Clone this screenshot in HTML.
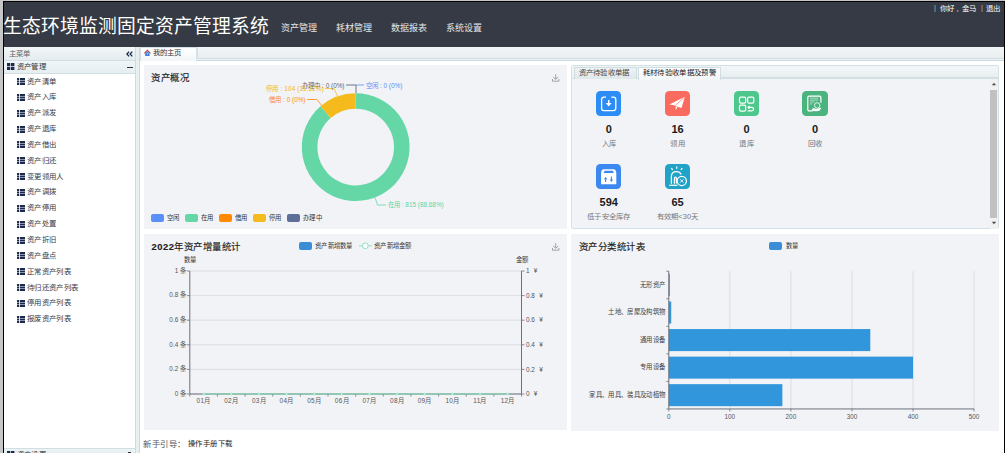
<!DOCTYPE html>
<html lang="zh-CN"><head><meta charset="utf-8"><style>
*{margin:0;padding:0;box-sizing:border-box}
html,body{width:1005px;height:453px;overflow:hidden;background:#c6c6c6;font-family:"Liberation Sans",sans-serif}
.a{position:absolute;white-space:nowrap}
svg{position:absolute;left:0;top:0;overflow:visible}
.it{position:absolute;left:17px;font-size:7.4px;letter-spacing:0.33px;line-height:10px;color:#343b4a;white-space:nowrap}
.it svg{left:0;top:1.5px}
.it span{position:absolute;left:10px;top:0;white-space:nowrap}
</style></head><body>
<div class="a" style="left:3px;top:1px;width:1002.00px;height:452.00px;background:#000"></div>
<div class="a" style="left:4px;top:2px;width:1000.00px;height:451.00px;background:#fff"></div>
<div class="a" style="left:4px;top:2px;width:1000.00px;height:44.50px;background:#353a44"></div>
<div class="a" style="left:2.70px;top:14.80px;font-size:18.8px;line-height:24px;color:#fff;font-weight:350">生态环境监测固定资产管理系统</div>
<div class="a" style="left:281.00px;top:22.20px;font-size:9px;line-height:12px;color:#e6e6e6;">资产管理</div>
<div class="a" style="left:336.00px;top:22.20px;font-size:9px;line-height:12px;color:#e6e6e6;">耗材管理</div>
<div class="a" style="left:391.00px;top:22.20px;font-size:9px;line-height:12px;color:#e6e6e6;">数据报表</div>
<div class="a" style="left:446.00px;top:22.20px;font-size:9px;line-height:12px;color:#e6e6e6;">系统设置</div>
<div class="a" style="left:934.00px;top:3.40px;font-size:7.4px;line-height:10px;color:#bbb;">|</div>
<div class="a" style="left:940.00px;top:3.50px;font-size:7.4px;line-height:10px;color:#fff;letter-spacing:0.33px">你好</div>
<div class="a" style="left:956.50px;top:3.50px;font-size:7.4px;line-height:10px;color:#fff;">,</div>
<div class="a" style="left:961.50px;top:3.50px;font-size:7.4px;line-height:10px;color:#fff;letter-spacing:0.33px">金马</div>
<div class="a" style="left:981.00px;top:3.40px;font-size:7.4px;line-height:10px;color:#bbb;">|</div>
<div class="a" style="left:986.00px;top:3.50px;font-size:7.4px;line-height:10px;color:#fff;letter-spacing:0.33px">退出</div>
<div class="a" style="left:4px;top:46.5px;width:131.50px;height:406.50px;background:#fff;border-right:1px solid #cbdbe0"></div>
<div class="a" style="left:4px;top:46.5px;width:130.50px;height:14.00px;background:linear-gradient(#f3f7f8,#e4ecef);border-bottom:1px solid #d0dfe4"></div>
<div class="a" style="left:4px;top:60.5px;width:130.50px;height:13.00px;background:linear-gradient(#eff5f7,#e6eef1);border-bottom:1px solid #d0dfe4"></div>
<div class="a" style="left:8.50px;top:49.00px;font-size:7.4px;line-height:10px;color:#666;letter-spacing:0.33px">主菜单</div>
<svg style="left:126px;top:50.5px" width="7" height="6" viewBox="0 0 7 6"><path d="M3.1 0.6L0.9 3L3.1 5.4M6.3 0.6L4.1 3L6.3 5.4" stroke="#1c2b4d" stroke-width="1.3" fill="none"/></svg>
<svg style="left:7px;top:63px" width="7.5" height="7" viewBox="0 0 7.5 7"><path d="M0 0h3.3v3.1H0zM4 0h3.4v3.1H4zM0 3.8h3.3v3.2H0zM4 3.8h3.4v3.2H4z" fill="#1c2b4d"/></svg>
<div class="a" style="left:16.70px;top:62.00px;font-size:7.4px;line-height:10px;color:#333;letter-spacing:0.33px">资产管理</div>
<div class="a" style="left:127px;top:66.5px;width:6.00px;height:1.20px;background:#333"></div>
<div class="it" style="top:76.60px"><svg width="8" height="7" viewBox="0 0 8 7"><path d="M0 0h2v2H0zM0 2.5h2v2H0zM0 5h2v2H0zM2.8 0H8v2H2.8zM2.8 2.5H8v2H2.8zM2.8 5H8v2H2.8z" fill="#1c2b4d"/></svg><span>资产清单</span></div>
<div class="it" style="top:92.44px"><svg width="8" height="7" viewBox="0 0 8 7"><path d="M0 0h2v2H0zM0 2.5h2v2H0zM0 5h2v2H0zM2.8 0H8v2H2.8zM2.8 2.5H8v2H2.8zM2.8 5H8v2H2.8z" fill="#1c2b4d"/></svg><span>资产入库</span></div>
<div class="it" style="top:108.28px"><svg width="8" height="7" viewBox="0 0 8 7"><path d="M0 0h2v2H0zM0 2.5h2v2H0zM0 5h2v2H0zM2.8 0H8v2H2.8zM2.8 2.5H8v2H2.8zM2.8 5H8v2H2.8z" fill="#1c2b4d"/></svg><span>资产派发</span></div>
<div class="it" style="top:124.12px"><svg width="8" height="7" viewBox="0 0 8 7"><path d="M0 0h2v2H0zM0 2.5h2v2H0zM0 5h2v2H0zM2.8 0H8v2H2.8zM2.8 2.5H8v2H2.8zM2.8 5H8v2H2.8z" fill="#1c2b4d"/></svg><span>资产退库</span></div>
<div class="it" style="top:139.96px"><svg width="8" height="7" viewBox="0 0 8 7"><path d="M0 0h2v2H0zM0 2.5h2v2H0zM0 5h2v2H0zM2.8 0H8v2H2.8zM2.8 2.5H8v2H2.8zM2.8 5H8v2H2.8z" fill="#1c2b4d"/></svg><span>资产借出</span></div>
<div class="it" style="top:155.80px"><svg width="8" height="7" viewBox="0 0 8 7"><path d="M0 0h2v2H0zM0 2.5h2v2H0zM0 5h2v2H0zM2.8 0H8v2H2.8zM2.8 2.5H8v2H2.8zM2.8 5H8v2H2.8z" fill="#1c2b4d"/></svg><span>资产归还</span></div>
<div class="it" style="top:171.64px"><svg width="8" height="7" viewBox="0 0 8 7"><path d="M0 0h2v2H0zM0 2.5h2v2H0zM0 5h2v2H0zM2.8 0H8v2H2.8zM2.8 2.5H8v2H2.8zM2.8 5H8v2H2.8z" fill="#1c2b4d"/></svg><span>变更领用人</span></div>
<div class="it" style="top:187.48px"><svg width="8" height="7" viewBox="0 0 8 7"><path d="M0 0h2v2H0zM0 2.5h2v2H0zM0 5h2v2H0zM2.8 0H8v2H2.8zM2.8 2.5H8v2H2.8zM2.8 5H8v2H2.8z" fill="#1c2b4d"/></svg><span>资产调拨</span></div>
<div class="it" style="top:203.32px"><svg width="8" height="7" viewBox="0 0 8 7"><path d="M0 0h2v2H0zM0 2.5h2v2H0zM0 5h2v2H0zM2.8 0H8v2H2.8zM2.8 2.5H8v2H2.8zM2.8 5H8v2H2.8z" fill="#1c2b4d"/></svg><span>资产停用</span></div>
<div class="it" style="top:219.16px"><svg width="8" height="7" viewBox="0 0 8 7"><path d="M0 0h2v2H0zM0 2.5h2v2H0zM0 5h2v2H0zM2.8 0H8v2H2.8zM2.8 2.5H8v2H2.8zM2.8 5H8v2H2.8z" fill="#1c2b4d"/></svg><span>资产处置</span></div>
<div class="it" style="top:235.00px"><svg width="8" height="7" viewBox="0 0 8 7"><path d="M0 0h2v2H0zM0 2.5h2v2H0zM0 5h2v2H0zM2.8 0H8v2H2.8zM2.8 2.5H8v2H2.8zM2.8 5H8v2H2.8z" fill="#1c2b4d"/></svg><span>资产折旧</span></div>
<div class="it" style="top:250.84px"><svg width="8" height="7" viewBox="0 0 8 7"><path d="M0 0h2v2H0zM0 2.5h2v2H0zM0 5h2v2H0zM2.8 0H8v2H2.8zM2.8 2.5H8v2H2.8zM2.8 5H8v2H2.8z" fill="#1c2b4d"/></svg><span>资产盘点</span></div>
<div class="it" style="top:266.68px"><svg width="8" height="7" viewBox="0 0 8 7"><path d="M0 0h2v2H0zM0 2.5h2v2H0zM0 5h2v2H0zM2.8 0H8v2H2.8zM2.8 2.5H8v2H2.8zM2.8 5H8v2H2.8z" fill="#1c2b4d"/></svg><span>正常资产列表</span></div>
<div class="it" style="top:282.52px"><svg width="8" height="7" viewBox="0 0 8 7"><path d="M0 0h2v2H0zM0 2.5h2v2H0zM0 5h2v2H0zM2.8 0H8v2H2.8zM2.8 2.5H8v2H2.8zM2.8 5H8v2H2.8z" fill="#1c2b4d"/></svg><span>待归还资产列表</span></div>
<div class="it" style="top:298.36px"><svg width="8" height="7" viewBox="0 0 8 7"><path d="M0 0h2v2H0zM0 2.5h2v2H0zM0 5h2v2H0zM2.8 0H8v2H2.8zM2.8 2.5H8v2H2.8zM2.8 5H8v2H2.8z" fill="#1c2b4d"/></svg><span>停用资产列表</span></div>
<div class="it" style="top:314.20px"><svg width="8" height="7" viewBox="0 0 8 7"><path d="M0 0h2v2H0zM0 2.5h2v2H0zM0 5h2v2H0zM2.8 0H8v2H2.8zM2.8 2.5H8v2H2.8zM2.8 5H8v2H2.8z" fill="#1c2b4d"/></svg><span>报废资产列表</span></div>
<div class="a" style="left:4px;top:447.5px;width:130.50px;height:5.50px;background:linear-gradient(#eff5f7,#e6eef1);border-top:1px solid #d0dfe4"></div>
<svg style="left:7px;top:450.5px" width="7.5" height="7" viewBox="0 0 7.5 7"><path d="M0 0h3.3v3.1H0zM4 0h3.4v3.1H4zM0 3.8h3.3v3.2H0zM4 3.8h3.4v3.2H4z" fill="#1c2b4d"/></svg>
<div class="a" style="left:16.70px;top:449.50px;font-size:7.4px;line-height:10px;color:#333;letter-spacing:0.33px">资产设置</div>
<div class="a" style="left:128px;top:451.5px;width:3.00px;height:1.00px;background:#333"></div>
<div class="a" style="left:135.5px;top:46.5px;width:3.00px;height:406.50px;background:#e8eff1"></div>
<div class="a" style="left:138.5px;top:46.5px;width:865.50px;height:406.50px;background:#fff;border-left:1px solid #cbdbe0"></div>
<div class="a" style="left:139.5px;top:46.5px;width:864.50px;height:14.50px;background:#eef3f5;border-bottom:1px solid #cadbe0"></div>
<div class="a" style="left:197px;top:47px;width:807.00px;height:11.50px;background:linear-gradient(#f3f6f7,#e8eef0);border-left:1px solid #d6e2e5;border-bottom:1px solid #cfdce0;border-radius:0 0 0 2px"></div>
<div class="a" style="left:140px;top:47px;width:57.00px;height:14.00px;background:linear-gradient(#ffffff,#f1f6f7);border:1px solid #d3e0e4;border-bottom:none;border-radius:2px 2px 0 0"></div>
<svg style="left:140px;top:46px" width="20" height="14" viewBox="0 0 20 14"><path d="M4.4 7.4L7.4 4.3L10.4 7.4" stroke="#a8454a" stroke-width="1.1" fill="none"/><path d="M5.2 7.6L7.4 5.6L9.6 7.6V9.9H5.2Z" fill="#3b7fd6"/><path d="M7 7.2H7.8V8.6H7Z" fill="#fff"/></svg>
<div class="a" style="left:152.50px;top:48.00px;font-size:7.4px;line-height:10px;color:#333;letter-spacing:0.33px">我的主页</div>
<div class="a" style="left:143.5px;top:65px;width:423.30px;height:164.00px;background:#f2f3f7"></div>
<div class="a" style="left:151.40px;top:72.00px;font-size:9.4px;line-height:12px;color:#222;font-weight:500;letter-spacing:0.5px;-webkit-text-stroke:0.15px #222">资产概况</div>
<svg style="left:552px;top:74px" width="8" height="8" viewBox="0 0 8 8"><path d="M3.7 0.2V5.2M1.2 3L3.7 5.3L6.2 3M0.5 5V7.2H6.9V5" stroke="#9a9a9a" stroke-width="0.9" fill="none"/></svg>
<svg width="1005" height="453" viewBox="0 0 1005 453"><path d="M355.70 93.20A53.9 53.9 0 1 1 320.52 106.26L330.70 118.08A38.3 38.3 0 1 0 355.70 108.80Z" fill="#65d7a7"/><path d="M320.52 106.26A53.9 53.9 0 0 1 355.70 93.20L355.70 108.80A38.3 38.3 0 0 0 330.70 118.08Z" fill="#f5bb1d"/><path d="M356 93V85H346" stroke="#6f7787" stroke-width="1" fill="none"/><path d="M356 85H364" stroke="#5b8ff9" stroke-width="0.8" fill="none"/><path d="M337.5 96L334 88.5H325" stroke="#f5bb1d" stroke-width="0.8" fill="none"/><path d="M322 106L317 99.5H307" stroke="#ff8a00" stroke-width="0.8" fill="none"/><path d="M375 197.5L377.5 205H386" stroke="#65d7a7" stroke-width="0.8" fill="none"/></svg>
<div class="a" style="right:660.50px;top:80.50px;font-size:6.4px;line-height:9px;color:#5f6673;text-align:right;">办理中 : 0 (0%)</div>
<div class="a" style="left:366.20px;top:80.50px;font-size:6.4px;line-height:9px;color:#5b8ff9;">空闲 : 0 (0%)</div>
<div class="a" style="right:681.00px;top:84.00px;font-size:6.4px;line-height:9px;color:#f3b512;text-align:right;letter-spacing:0.15px">停用 : 104 (11.32%)</div>
<div class="a" style="right:699.50px;top:95.00px;font-size:6.4px;line-height:9px;color:#fb8c12;text-align:right;">借用 : 0 (0%)</div>
<div class="a" style="left:388.00px;top:199.90px;font-size:6.4px;line-height:9px;color:#5fd4a3;">在用 : 815 (88.68%)</div>
<div class="a" style="left:151.2px;top:214.2px;width:13.00px;height:7.60px;background:#5b8ff9;border-radius:2px"></div>
<div class="a" style="left:167.20px;top:212.90px;font-size:6.4px;line-height:9px;color:#333;letter-spacing:0.3px">空闲</div>
<div class="a" style="left:185.2px;top:214.2px;width:13.00px;height:7.60px;background:#65d7a7;border-radius:2px"></div>
<div class="a" style="left:201.20px;top:212.90px;font-size:6.4px;line-height:9px;color:#333;letter-spacing:0.3px">在用</div>
<div class="a" style="left:219.2px;top:214.2px;width:13.00px;height:7.60px;background:#ff8a00;border-radius:2px"></div>
<div class="a" style="left:235.20px;top:212.90px;font-size:6.4px;line-height:9px;color:#333;letter-spacing:0.3px">借用</div>
<div class="a" style="left:253.2px;top:214.2px;width:13.00px;height:7.60px;background:#f5bb1d;border-radius:2px"></div>
<div class="a" style="left:269.20px;top:212.90px;font-size:6.4px;line-height:9px;color:#333;letter-spacing:0.3px">停用</div>
<div class="a" style="left:287.2px;top:214.2px;width:13.00px;height:7.60px;background:#5d6f98;border-radius:2px"></div>
<div class="a" style="left:303.20px;top:212.90px;font-size:6.4px;line-height:9px;color:#333;letter-spacing:0.3px">办理中</div>
<div class="a" style="left:571px;top:65.3px;width:427.80px;height:164.20px;background:#f2f3f7;border:1px solid #d2e2e6;border-radius:2px"></div>
<div class="a" style="left:572px;top:66px;width:425.80px;height:13.00px;background:#f0f4f5;border-bottom:1px solid #d2e0e4"></div>
<div class="a" style="left:721px;top:66.5px;width:276.80px;height:11.50px;background:linear-gradient(#f3f7f8,#e8eef0);border-bottom:1px solid #d3dfe3"></div>
<div class="a" style="left:574px;top:67px;width:63.00px;height:12.00px;background:linear-gradient(#eef3f5,#dfe8eb);border:1px solid #d0dde1;border-bottom:none"></div>
<div class="a" style="left:578.50px;top:67.90px;font-size:7.4px;line-height:10px;color:#444;letter-spacing:0.33px">资产待验收单据</div>
<div class="a" style="left:637.5px;top:66.5px;width:83.50px;height:13.00px;background:linear-gradient(#ffffff,#f2f6f8);border:1px solid #d0dde1;border-bottom:none"></div>
<div class="a" style="left:642.60px;top:67.80px;font-size:7.4px;line-height:10px;color:#1a1a1a;letter-spacing:0.33px;font-weight:500">耗材待验收单据及预警</div>
<div class="a" style="left:989.5px;top:79px;width:8.30px;height:149.50px;background:#f1f1f1"></div>
<div class="a" style="left:990.3px;top:90px;width:6.70px;height:128.00px;background:#c1c1c1"></div>
<svg style="left:991px;top:82px" width="6" height="4" viewBox="0 0 6 4"><path d="M0.8 3.2L3 0.8L5.2 3.2Z" fill="#505050"/></svg>
<svg style="left:991px;top:221px" width="6" height="4" viewBox="0 0 6 4"><path d="M0.8 0.8L3 3.2L5.2 0.8Z" fill="#505050"/></svg>
<div class="a" style="left:596px;top:90.5px;width:25.30px;height:25.20px;background:#2b8df5;border-radius:4.3px"></div>
<svg style="left:596px;top:90.5px" width="25" height="25" viewBox="0 0 25 25"><path d="M10 6.2H8Q5.6 6.2 5.6 8.6V17.2Q5.6 19.6 8 19.6H17.4Q19.8 19.6 19.8 17.2V8.6Q19.8 6.2 17.4 6.2H15.3" stroke="#fff" stroke-width="1.3" fill="none"/><path d="M12.7 9V12.5" stroke="#fff" stroke-width="1.5"/><path d="M9.7 12L12.7 15.4L15.7 12Z" fill="#fff"/></svg>
<div class="a" style="left:508.75px;width:200px;text-align:center;top:123.30px;font-size:11px;line-height:13px;color:#1a1a1a;font-weight:bold">0</div>
<div class="a" style="left:508.75px;width:200px;text-align:center;top:138.50px;font-size:7.4px;line-height:10px;color:#777;letter-spacing:0.2px">入库</div>
<div class="a" style="left:664.8px;top:90.5px;width:25.30px;height:25.20px;background:#f96b5e;border-radius:4.3px"></div>
<svg style="left:664.8px;top:90.5px" width="25" height="25" viewBox="0 0 25 25"><path d="M19.9 5.8L4.3 13.4L9.3 14.3L10.9 15.2L16.5 17Z" fill="#fff"/><path d="M19.9 5.8L10.2 14.6" stroke="#f96b5e" stroke-width="0.7"/><path d="M10.6 15.6L10.7 19L12.4 16.4Z" fill="#fff"/></svg>
<div class="a" style="left:577.55px;width:200px;text-align:center;top:123.30px;font-size:11px;line-height:13px;color:#1a1a1a;font-weight:bold">16</div>
<div class="a" style="left:577.55px;width:200px;text-align:center;top:138.50px;font-size:7.4px;line-height:10px;color:#777;letter-spacing:0.2px">领用</div>
<div class="a" style="left:733.8px;top:90.5px;width:25.30px;height:25.20px;background:#4dc78b;border-radius:4.3px"></div>
<svg style="left:733.8px;top:90.5px" width="25" height="25" viewBox="0 0 25 25"><g stroke="#fff" stroke-width="1.2" fill="none"><rect x="5.5" y="6.2" width="6.2" height="6" rx="1.4"/><rect x="13.6" y="6.2" width="6.2" height="6" rx="1.4"/><rect x="5.5" y="14.2" width="6.2" height="6" rx="1.4"/><path d="M14.3 16.3H17.8Q19.6 16.3 19.6 18Q19.6 19.8 17.8 19.8H13.6"/><path d="M15.6 14.8L14 16.3L15.6 17.8" stroke-width="1.1"/></g></svg>
<div class="a" style="left:646.55px;width:200px;text-align:center;top:123.30px;font-size:11px;line-height:13px;color:#1a1a1a;font-weight:bold">0</div>
<div class="a" style="left:646.55px;width:200px;text-align:center;top:138.50px;font-size:7.4px;line-height:10px;color:#777;letter-spacing:0.2px">退库</div>
<div class="a" style="left:802.4px;top:90.5px;width:25.30px;height:25.20px;background:#4bb37d;border-radius:4.3px"></div>
<svg style="left:802.4px;top:90.5px" width="25" height="25" viewBox="0 0 25 25"><g stroke="#fff" fill="none"><path d="M10.8 19.9H7.1Q5.8 19.9 5.8 18.6V6.5Q5.8 5.2 7.1 5.2H17.6Q18.9 5.2 18.9 6.5V11.8" stroke-width="1.2"/><path d="M8 7.2H16.2M8 9.1H16.2M8 11H12.5M8 12.9H10" stroke-width="0.9" opacity="0.6"/><circle cx="15.2" cy="14.4" r="2.7" stroke-width="1" opacity="0.85"/></g><path d="M9.9 18.6Q10.3 17 12 17.3L14.5 18L19.6 16.6L17.8 19.6Q16 20.6 13.5 20.3L11 19.9Q9.8 19.6 9.9 18.6Z" fill="#fff"/></svg>
<div class="a" style="left:715.15px;width:200px;text-align:center;top:123.30px;font-size:11px;line-height:13px;color:#1a1a1a;font-weight:bold">0</div>
<div class="a" style="left:715.15px;width:200px;text-align:center;top:138.50px;font-size:7.4px;line-height:10px;color:#777;letter-spacing:0.2px">回收</div>
<div class="a" style="left:596px;top:163.6px;width:25.30px;height:25.20px;background:#3c88f1;border-radius:4.3px"></div>
<svg style="left:596px;top:163.6px" width="25" height="25" viewBox="0 0 25 25"><path d="M5.1 9.5Q5.1 5.2 8 5.2H17.4Q20.3 5.2 20.3 9.5V20.2H5.1Z" fill="#fff"/><path d="M7.6 8.9L8.6 6.8H16.8L17.8 8.9Z" fill="#3c88f1"/><path d="M9.6 18V13.8M15.4 12.6V16.8" stroke="#3c88f1" stroke-width="1.1"/><path d="M7.9 15.2L9.6 12.9L11.3 15.2ZM13.7 15.6L15.4 17.9L17.1 15.6Z" fill="#3c88f1"/></svg>
<div class="a" style="left:508.75px;width:200px;text-align:center;top:196.40px;font-size:11px;line-height:13px;color:#1a1a1a;font-weight:bold">594</div>
<div class="a" style="left:508.75px;width:200px;text-align:center;top:211.60px;font-size:7.4px;line-height:10px;color:#777;letter-spacing:0.2px">低于安全库存</div>
<div class="a" style="left:664.8px;top:163.6px;width:25.30px;height:25.20px;background:#20a3c6;border-radius:4.3px"></div>
<svg style="left:664.8px;top:163.6px" width="25" height="25" viewBox="0 0 25 25"><g stroke="#fff" fill="none" stroke-width="1.25"><path d="M6.4 19.8V12.6Q6.4 7.6 11.3 7.6Q14.8 7.6 16.2 10.4"/><path d="M9.4 19.8V14.6Q9.4 13.1 10.4 13.1Q11.4 13.1 11.4 14.6V19.6"/><path d="M4.3 21.3H12.4"/><path d="M11.7 2.6V4.8M6.3 4.2L7.7 5.9M17.3 4.2L15.9 5.9" stroke-width="1.3"/><circle cx="16.8" cy="16.9" r="4.6" stroke-width="1.25"/><path d="M15.2 15.3L18.4 18.5M18.4 15.3L15.2 18.5" stroke-width="0.9"/></g></svg>
<div class="a" style="left:577.55px;width:200px;text-align:center;top:196.40px;font-size:11px;line-height:13px;color:#1a1a1a;font-weight:bold">65</div>
<div class="a" style="left:577.55px;width:200px;text-align:center;top:211.60px;font-size:7.4px;line-height:10px;color:#777;letter-spacing:0.2px">有效期&lt;30天</div>
<div class="a" style="left:143.5px;top:234.4px;width:423.20px;height:196.10px;background:#f2f3f7"></div>
<div class="a" style="left:151.50px;top:241.00px;font-size:9.4px;line-height:12px;color:#222;font-weight:500;letter-spacing:0.5px;-webkit-text-stroke:0.15px #222"><b>2022</b>年资产增量统计</div>
<svg style="left:552px;top:243px" width="8" height="8" viewBox="0 0 8 8"><path d="M3.7 0.2V5.2M1.2 3L3.7 5.3L6.2 3M0.5 5V7.2H6.9V5" stroke="#9a9a9a" stroke-width="0.9" fill="none"/></svg>
<div class="a" style="left:299.2px;top:242.1px;width:13.10px;height:7.50px;background:#3a8ed6;border-radius:2px"></div>
<div class="a" style="left:315.00px;top:242.00px;font-size:6.4px;line-height:8px;color:#333;letter-spacing:0.3px">资产新增数量</div>
<div class="a" style="left:374.00px;top:242.00px;font-size:6.4px;line-height:8px;color:#333;letter-spacing:0.3px">资产新增金额</div>
<svg width="1005" height="453" viewBox="0 0 1005 453"><path d="M359 245.8H372" stroke="#91e0c0" stroke-width="1"/><circle cx="365.3" cy="245.8" r="2.9" fill="#fff" stroke="#8fdfbf" stroke-width="1"/><path d="M189.8 271.00H521.5" stroke="#d6d7dd" stroke-width="0.8"/><path d="M186.8 271.00H189.8M521.5 271.00H524.5" stroke="#6e7079" stroke-width="0.8"/><path d="M189.8 295.60H521.5" stroke="#d6d7dd" stroke-width="0.8"/><path d="M186.8 295.60H189.8M521.5 295.60H524.5" stroke="#6e7079" stroke-width="0.8"/><path d="M189.8 320.20H521.5" stroke="#d6d7dd" stroke-width="0.8"/><path d="M186.8 320.20H189.8M521.5 320.20H524.5" stroke="#6e7079" stroke-width="0.8"/><path d="M189.8 344.80H521.5" stroke="#d6d7dd" stroke-width="0.8"/><path d="M186.8 344.80H189.8M521.5 344.80H524.5" stroke="#6e7079" stroke-width="0.8"/><path d="M189.8 369.40H521.5" stroke="#d6d7dd" stroke-width="0.8"/><path d="M186.8 369.40H189.8M521.5 369.40H524.5" stroke="#6e7079" stroke-width="0.8"/><path d="M189.8 394.00H521.5" stroke="#d6d7dd" stroke-width="0.8"/><path d="M186.8 394.00H189.8M521.5 394.00H524.5" stroke="#6e7079" stroke-width="0.8"/><path d="M189.8 271V394M521.5 271V394" stroke="#6e7079" stroke-width="1"/><path d="M189.8 394H521.5" stroke="#6e7079" stroke-width="1"/><path d="M189.80 394V396.5" stroke="#6e7079" stroke-width="0.8"/><path d="M217.44 394V396.5" stroke="#6e7079" stroke-width="0.8"/><path d="M245.08 394V396.5" stroke="#6e7079" stroke-width="0.8"/><path d="M272.73 394V396.5" stroke="#6e7079" stroke-width="0.8"/><path d="M300.37 394V396.5" stroke="#6e7079" stroke-width="0.8"/><path d="M328.01 394V396.5" stroke="#6e7079" stroke-width="0.8"/><path d="M355.65 394V396.5" stroke="#6e7079" stroke-width="0.8"/><path d="M383.29 394V396.5" stroke="#6e7079" stroke-width="0.8"/><path d="M410.93 394V396.5" stroke="#6e7079" stroke-width="0.8"/><path d="M438.57 394V396.5" stroke="#6e7079" stroke-width="0.8"/><path d="M466.22 394V396.5" stroke="#6e7079" stroke-width="0.8"/><path d="M493.86 394V396.5" stroke="#6e7079" stroke-width="0.8"/><path d="M521.50 394V396.5" stroke="#6e7079" stroke-width="0.8"/><polyline points="203.62,394 231.26,394 258.90,394 286.55,394 314.19,394 341.83,394 369.47,394 397.11,394 424.75,394 452.40,394 480.04,394 507.68,394" stroke="#7ce2b6" stroke-width="1.1" fill="none"/><circle cx="203.62" cy="394" r="1" fill="#fff" stroke="#78ddb3" stroke-width="0.6"/><circle cx="231.26" cy="394" r="1" fill="#fff" stroke="#78ddb3" stroke-width="0.6"/><circle cx="258.90" cy="394" r="1" fill="#fff" stroke="#78ddb3" stroke-width="0.6"/><circle cx="286.55" cy="394" r="1" fill="#fff" stroke="#78ddb3" stroke-width="0.6"/><circle cx="314.19" cy="394" r="1" fill="#fff" stroke="#78ddb3" stroke-width="0.6"/><circle cx="341.83" cy="394" r="1" fill="#fff" stroke="#78ddb3" stroke-width="0.6"/><circle cx="369.47" cy="394" r="1" fill="#fff" stroke="#78ddb3" stroke-width="0.6"/><circle cx="397.11" cy="394" r="1" fill="#fff" stroke="#78ddb3" stroke-width="0.6"/><circle cx="424.75" cy="394" r="1" fill="#fff" stroke="#78ddb3" stroke-width="0.6"/><circle cx="452.40" cy="394" r="1" fill="#fff" stroke="#78ddb3" stroke-width="0.6"/><circle cx="480.04" cy="394" r="1" fill="#fff" stroke="#78ddb3" stroke-width="0.6"/><circle cx="507.68" cy="394" r="1" fill="#fff" stroke="#78ddb3" stroke-width="0.6"/></svg>
<div class="a" style="right:819.00px;top:265.70px;font-size:6.4px;line-height:9px;color:#555;text-align:right;">1 条</div>
<div class="a" style="left:526.00px;top:266.10px;font-size:6.4px;line-height:9px;color:#555;word-spacing:2.5px">1 ¥</div>
<div class="a" style="right:819.00px;top:290.30px;font-size:6.4px;line-height:9px;color:#555;text-align:right;">0.8 条</div>
<div class="a" style="left:526.00px;top:290.70px;font-size:6.4px;line-height:9px;color:#555;word-spacing:2.5px">0.8 ¥</div>
<div class="a" style="right:819.00px;top:314.90px;font-size:6.4px;line-height:9px;color:#555;text-align:right;">0.6 条</div>
<div class="a" style="left:526.00px;top:315.30px;font-size:6.4px;line-height:9px;color:#555;word-spacing:2.5px">0.6 ¥</div>
<div class="a" style="right:819.00px;top:339.50px;font-size:6.4px;line-height:9px;color:#555;text-align:right;">0.4 条</div>
<div class="a" style="left:526.00px;top:339.90px;font-size:6.4px;line-height:9px;color:#555;word-spacing:2.5px">0.4 ¥</div>
<div class="a" style="right:819.00px;top:364.10px;font-size:6.4px;line-height:9px;color:#555;text-align:right;">0.2 条</div>
<div class="a" style="left:526.00px;top:364.50px;font-size:6.4px;line-height:9px;color:#555;word-spacing:2.5px">0.2 ¥</div>
<div class="a" style="right:819.00px;top:388.70px;font-size:6.4px;line-height:9px;color:#555;text-align:right;">0 条</div>
<div class="a" style="left:526.00px;top:389.10px;font-size:6.4px;line-height:9px;color:#555;word-spacing:2.5px">0 ¥</div>
<div class="a" style="left:183.80px;top:256.00px;font-size:6.4px;line-height:8px;color:#333;letter-spacing:0.34px">数量</div>
<div class="a" style="left:516.00px;top:256.00px;font-size:6.4px;line-height:8px;color:#333;letter-spacing:0.34px">金额</div>
<div class="a" style="left:103.62px;width:200px;text-align:center;top:396.50px;font-size:6.4px;line-height:8px;color:#555;letter-spacing:0.3px">01月</div>
<div class="a" style="left:131.26px;width:200px;text-align:center;top:396.50px;font-size:6.4px;line-height:8px;color:#555;letter-spacing:0.3px">02月</div>
<div class="a" style="left:158.90px;width:200px;text-align:center;top:396.50px;font-size:6.4px;line-height:8px;color:#555;letter-spacing:0.3px">03月</div>
<div class="a" style="left:186.55px;width:200px;text-align:center;top:396.50px;font-size:6.4px;line-height:8px;color:#555;letter-spacing:0.3px">04月</div>
<div class="a" style="left:214.19px;width:200px;text-align:center;top:396.50px;font-size:6.4px;line-height:8px;color:#555;letter-spacing:0.3px">05月</div>
<div class="a" style="left:241.83px;width:200px;text-align:center;top:396.50px;font-size:6.4px;line-height:8px;color:#555;letter-spacing:0.3px">06月</div>
<div class="a" style="left:269.47px;width:200px;text-align:center;top:396.50px;font-size:6.4px;line-height:8px;color:#555;letter-spacing:0.3px">07月</div>
<div class="a" style="left:297.11px;width:200px;text-align:center;top:396.50px;font-size:6.4px;line-height:8px;color:#555;letter-spacing:0.3px">08月</div>
<div class="a" style="left:324.75px;width:200px;text-align:center;top:396.50px;font-size:6.4px;line-height:8px;color:#555;letter-spacing:0.3px">09月</div>
<div class="a" style="left:352.40px;width:200px;text-align:center;top:396.50px;font-size:6.4px;line-height:8px;color:#555;letter-spacing:0.3px">10月</div>
<div class="a" style="left:380.04px;width:200px;text-align:center;top:396.50px;font-size:6.4px;line-height:8px;color:#555;letter-spacing:0.3px">11月</div>
<div class="a" style="left:407.68px;width:200px;text-align:center;top:396.50px;font-size:6.4px;line-height:8px;color:#555;letter-spacing:0.3px">12月</div>
<div class="a" style="left:571px;top:234.2px;width:427.80px;height:196.40px;background:#f2f3f7"></div>
<div class="a" style="left:578.90px;top:240.90px;font-size:9.4px;line-height:12px;color:#222;font-weight:500;letter-spacing:0.5px;-webkit-text-stroke:0.15px #222">资产分类统计表</div>
<div class="a" style="left:769.3px;top:242px;width:13.10px;height:7.60px;background:#3a8ed6;border-radius:2px"></div>
<div class="a" style="left:785.50px;top:241.80px;font-size:6.4px;line-height:8px;color:#333;letter-spacing:0.34px">数量</div>
<svg width="1005" height="453" viewBox="0 0 1005 453"><path d="M729.86 271.2V408.95" stroke="#d6d7dd" stroke-width="0.8"/><path d="M790.92 271.2V408.95" stroke="#d6d7dd" stroke-width="0.8"/><path d="M851.98 271.2V408.95" stroke="#d6d7dd" stroke-width="0.8"/><path d="M913.04 271.2V408.95" stroke="#d6d7dd" stroke-width="0.8"/><path d="M974.10 271.2V408.95" stroke="#d6d7dd" stroke-width="0.8"/><rect x="668.8" y="273.95" width="1.00" height="22.04" fill="#3296dc"/><rect x="668.8" y="301.50" width="2.44" height="22.04" fill="#3296dc"/><rect x="668.8" y="329.06" width="201.50" height="22.04" fill="#3296dc"/><rect x="668.8" y="356.61" width="244.24" height="22.04" fill="#3296dc"/><rect x="668.8" y="384.15" width="113.57" height="22.04" fill="#3296dc"/><path d="M668.8 271.2V408.95H974.0999999999999" stroke="#6e7079" stroke-width="1" fill="none"/><path d="M666.3 271.20H668.8" stroke="#6e7079" stroke-width="0.8"/><path d="M668.80 408.95V411.45" stroke="#6e7079" stroke-width="0.8"/><path d="M666.3 298.75H668.8" stroke="#6e7079" stroke-width="0.8"/><path d="M729.86 408.95V411.45" stroke="#6e7079" stroke-width="0.8"/><path d="M666.3 326.30H668.8" stroke="#6e7079" stroke-width="0.8"/><path d="M790.92 408.95V411.45" stroke="#6e7079" stroke-width="0.8"/><path d="M666.3 353.85H668.8" stroke="#6e7079" stroke-width="0.8"/><path d="M851.98 408.95V411.45" stroke="#6e7079" stroke-width="0.8"/><path d="M666.3 381.40H668.8" stroke="#6e7079" stroke-width="0.8"/><path d="M913.04 408.95V411.45" stroke="#6e7079" stroke-width="0.8"/><path d="M666.3 408.95H668.8" stroke="#6e7079" stroke-width="0.8"/><path d="M974.10 408.95V411.45" stroke="#6e7079" stroke-width="0.8"/></svg>
<div class="a" style="right:339.60px;top:280.67px;font-size:6.4px;line-height:8px;color:#444;text-align:right;letter-spacing:0.34px">无形资产</div>
<div class="a" style="right:339.60px;top:308.22px;font-size:6.4px;line-height:8px;color:#444;text-align:right;letter-spacing:0.34px">土地、房屋及构筑物</div>
<div class="a" style="right:339.60px;top:335.77px;font-size:6.4px;line-height:8px;color:#444;text-align:right;letter-spacing:0.34px">通用设备</div>
<div class="a" style="right:339.60px;top:363.32px;font-size:6.4px;line-height:8px;color:#444;text-align:right;letter-spacing:0.34px">专用设备</div>
<div class="a" style="right:339.60px;top:390.88px;font-size:6.4px;line-height:8px;color:#444;text-align:right;letter-spacing:0.34px">家具、用具、装具及动植物</div>
<div class="a" style="left:568.80px;width:200px;text-align:center;top:411.50px;font-size:6.4px;line-height:9px;color:#555;">0</div>
<div class="a" style="left:629.86px;width:200px;text-align:center;top:411.50px;font-size:6.4px;line-height:9px;color:#555;">100</div>
<div class="a" style="left:690.92px;width:200px;text-align:center;top:411.50px;font-size:6.4px;line-height:9px;color:#555;">200</div>
<div class="a" style="left:751.98px;width:200px;text-align:center;top:411.50px;font-size:6.4px;line-height:9px;color:#555;">300</div>
<div class="a" style="left:813.04px;width:200px;text-align:center;top:411.50px;font-size:6.4px;line-height:9px;color:#555;">400</div>
<div class="a" style="left:874.10px;width:200px;text-align:center;top:411.50px;font-size:6.4px;line-height:9px;color:#555;">500</div>
<div class="a" style="left:143.00px;top:438.50px;font-size:8.4px;line-height:11px;color:#555;letter-spacing:0.6px">新手引导：</div>
<div class="a" style="left:187.60px;top:439.00px;font-size:7.4px;line-height:10px;color:#222;letter-spacing:0.5px">操作手册下载</div>
</body></html>
